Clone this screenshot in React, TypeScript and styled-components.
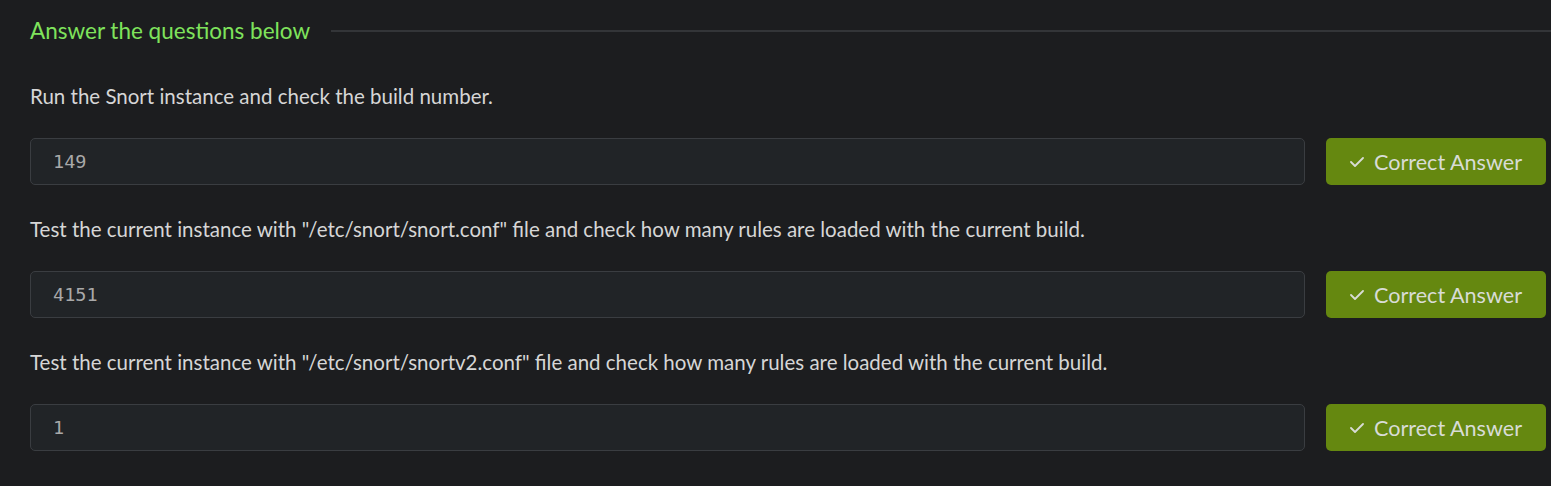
import { Fragment } from "react";
import styled, { createGlobalStyle } from "styled-components";

const GlobalStyle = createGlobalStyle`
  body {
    margin: 0;
    background: #1c1d1f;
    font-family: Lato, "Noto Sans", sans-serif;
  }
`;

const Page = styled.div`
  padding: 0 5px 0 30px;
  overflow: hidden;
`;

const Header = styled.div`
  display: flex;
  align-items: center;
  gap: 21px;
  height: 61px;
  margin-right: -5px;
`;

const Title = styled.h3`
  margin: 0;
  font-size: 22.5px;
  font-weight: 400;
  color: #7fe35c;
  white-space: nowrap;
`;

const Rule = styled.div`
  flex: 1;
  height: 2px;
  background: #333538;
`;

const Question = styled.p`
  margin: 21px 0 28px;
  font-size: 20.5px;
  line-height: 28px;
  color: #d6d6d6;

  & + div + & {
    margin-top: 30px;
  }
`;

const AnswerRow = styled.div`
  display: flex;
  gap: 21px;
  height: 47px;
`;

const AnswerField = styled.div`
  flex: 1;
  display: flex;
  align-items: center;
  padding: 0 22px;
  background: #212427;
  border: 1px solid #3a3d41;
  border-radius: 5px;
  font-family: "DejaVu Sans Mono", "Liberation Mono", monospace;
  font-size: 18.5px;
  color: #a9a9a9;
`;

const CorrectButton = styled.div`
  width: 220px;
  display: flex;
  align-items: center;
  justify-content: center;
  gap: 10px;
  background: #658810;
  border-radius: 5px;
  font-size: 21.6px;
  color: #d8dcd6;
`;

const questions = [
  { text: "Run the Snort instance and check the build number.", answer: "149" },
  {
    text: 'Test the current instance with "/etc/snort/snort.conf" file and check how many rules are loaded with the current build.',
    answer: "4151",
  },
  {
    text: 'Test the current instance with "/etc/snort/snortv2.conf" file and check how many rules are loaded with the current build.',
    answer: "1",
  },
];

function CheckIcon() {
  return (
    <svg width="14" height="10" viewBox="0 0 14 10" fill="none">
      <polyline
        points="1,5 5,9 13,1"
        stroke="#d8dcd6"
        strokeWidth="1.8"
        strokeLinecap="round"
        strokeLinejoin="round"
      />
    </svg>
  );
}

export default function App() {
  return (
    <>
      <GlobalStyle />
      <Page>
        <Header>
          <Title>Answer the questions below</Title>
          <Rule />
        </Header>
        {questions.map((q) => (
          <Fragment key={q.text}>
            <Question>{q.text}</Question>
            <AnswerRow>
              <AnswerField>{q.answer}</AnswerField>
              <CorrectButton>
                <CheckIcon />
                Correct Answer
              </CorrectButton>
            </AnswerRow>
          </Fragment>
        ))}
      </Page>
    </>
  );
}
